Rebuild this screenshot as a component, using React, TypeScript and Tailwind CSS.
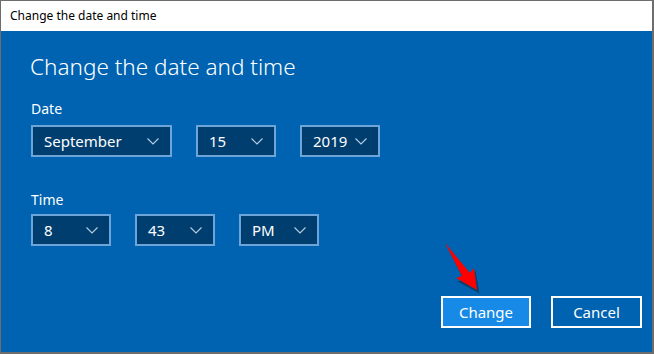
import React from "react";

function Chevron() {
  return (
    <svg width="12" height="7" viewBox="0 0 12 7" fill="none" className="shrink-0">
      <path d="M0.5 0.5 L6 6 L11.5 0.5" stroke="#b9cfe4" strokeWidth="1.1" />
    </svg>
  );
}

function Combo({ value, width }: { value: string; width: string }) {
  return (
    <div
      className={`${width} h-[32px] flex items-center justify-between pl-[11px] pr-[11px] border-2 border-[#6ea5d8] bg-[#003e70] text-white text-[15px]`}
    >
      <span className="leading-none">{value}</span>
      <Chevron />
    </div>
  );
}

export default function App() {
  return (
    <div
      className="w-[654px] h-[354px] flex flex-col bg-[#6d6d6d] pt-px pl-px pr-[2px] pb-[2px] relative overflow-hidden"
      style={{ fontFamily: '"Noto Sans", "Liberation Sans", sans-serif' }}
    >
      <div className="h-[30px] bg-white flex items-center pl-[9px] text-[12px] text-black shrink-0">
        Change the date and time
      </div>
      <div className="flex-1 bg-[#0063b1] text-white flex flex-col pl-[30px] pr-[10px]">
        <h1 className="text-[22.5px] font-light mt-[20px] leading-[32px] -ml-px">
          Change the date and time
        </h1>
        <div className="text-[14px] mt-[16px] leading-[20px]">Date</div>
        <div className="flex gap-[24px] mt-[6px]">
          <Combo value="September" width="w-[141px]" />
          <Combo value="15" width="w-[80px]" />
          <Combo value="2019" width="w-[80px]" />
        </div>
        <div className="text-[14px] mt-[33px] leading-[20px]">Time</div>
        <div className="flex gap-[24px] mt-[4px]">
          <Combo value="8" width="w-[80px]" />
          <Combo value="43" width="w-[80px]" />
          <Combo value="PM" width="w-[80px]" />
        </div>
        <div className="flex justify-end gap-[20px] mt-[50px]">
          <button className="w-[90px] h-[32px] border-2 border-white bg-[#168ae6] text-[15px] text-white">
            Change
          </button>
          <button className="w-[91px] h-[32px] border-2 border-white bg-[#0063b1] text-[15px] text-white">
            Cancel
          </button>
        </div>
      </div>
      <svg
        className="absolute left-[440px] top-[240px]"
        width="46"
        height="56"
        viewBox="0 0 46 56"
      >
        <path
          d="M5 4 L30 34 L34 29 L38 52 L16 40 L22 38 Z"
          fill="#10243a"
          opacity="0.55"
          transform="translate(1.5 1.5)"
        />
        <path d="M5 3 L30 33 L34 28 L37 50 L16 38 L22 36 Z" fill="#ff0000" />
      </svg>
    </div>
  );
}
